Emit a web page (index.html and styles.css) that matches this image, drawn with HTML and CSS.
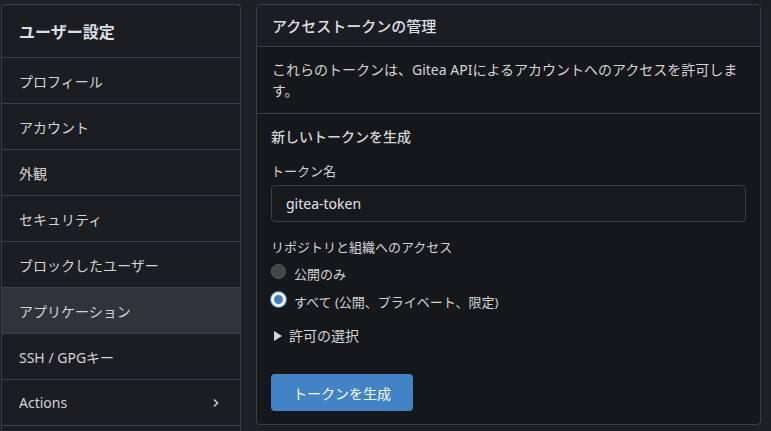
FILE: index.html
```html
<!DOCTYPE html>
<html lang="ja">
<head>
    <meta charset="UTF-8">
    <meta name="viewport" content="width=device-width, initial-scale=1.0">
    <title>アプリケーション - ユーザー設定</title>
    <link rel="stylesheet" href="styles.css">
</head>
<body>
    <div class="page">
        <div class="sidebar">
            <div class="sidebar-header">ユーザー設定</div>
            <a class="menu-item" href="#">プロフィール</a>
            <a class="menu-item" href="#">アカウント</a>
            <a class="menu-item" href="#">外観</a>
            <a class="menu-item" href="#">セキュリティ</a>
            <a class="menu-item" href="#">ブロックしたユーザー</a>
            <a class="menu-item active" href="#">アプリケーション</a>
            <a class="menu-item" href="#">SSH / GPGキー</a>
            <a class="menu-item" href="#">
                <span>Actions</span>
                <svg class="chevron" width="10" height="10" viewBox="0 0 10 10">
                    <path d="M3 1.5 L6.5 5 L3 8.5" fill="none" stroke="currentColor" stroke-width="1.6"/>
                </svg>
            </a>
            <div class="menu-rest"></div>
        </div>

        <div class="panel">
            <div class="panel-header">アクセストークンの管理</div>
            <div class="panel-section">
                これらのトークンは、Gitea APIによるアカウントへのアクセスを許可します。
            </div>
            <div class="panel-body">
                <div class="form-title">新しいトークンを生成</div>

                <div class="field">
                    <label class="field-label" for="tokenName">トークン名</label>
                    <input class="text-input" id="tokenName" type="text" value="gitea-token">
                </div>

                <div class="field field-radios">
                    <div class="field-label">リポジトリと組織へのアクセス</div>
                    <label class="radio-row">
                        <input class="radio" type="radio" name="scope">
                        <span>公開のみ</span>
                    </label>
                    <label class="radio-row">
                        <input class="radio" type="radio" name="scope" checked>
                        <span>すべて (公開、プライベート、限定)</span>
                    </label>
                </div>

                <details class="perm">
                    <summary>許可の選択</summary>
                </details>

                <button class="btn btn-primary">トークンを生成</button>
            </div>
        </div>
    </div>
</body>
</html>
```

FILE: styles.css
```css
* {
    box-sizing: border-box;
    margin: 0;
    padding: 0;
}

body {
    font-family: "Noto Sans", "Noto Sans CJK JP", sans-serif;
    font-size: 14px;
    background: #1d1f25;
    color: #d2d4d8;
    overflow: hidden;
}

.page {
    display: flex;
    align-items: flex-start;
    gap: 15px;
    padding: 4px 10px 0 1px;
}

.sidebar {
    width: 240px;
    flex-shrink: 0;
    background: #1b1d22;
    border: 1px solid #3a3e46;
    border-bottom: none;
    border-radius: 4px 4px 0 0;
    display: flex;
    flex-direction: column;
}

.sidebar-header {
    height: 53px;
    padding: 0 17px;
    display: flex;
    align-items: center;
    font-size: 16px;
    font-weight: 600;
    color: #dcdee2;
    border-bottom: 1px solid #3a3e46;
}

.menu-item {
    height: 46px;
    padding: 0 17px;
    display: flex;
    align-items: center;
    justify-content: space-between;
    color: #d2d4d8;
    text-decoration: none;
    border-bottom: 1px solid #3a3e46;
}

.menu-item.active {
    background: #30333a;
}

.menu-rest {
    height: 40px;
}

.chevron {
    color: #c8cacf;
    margin-right: 2px;
}

.panel {
    flex: 1;
    background: #15171b;
    border: 1px solid #3a3e46;
    border-radius: 4px;
}

.panel-header {
    height: 42px;
    padding: 0 15px;
    display: flex;
    align-items: center;
    background: #1b1d22;
    font-size: 15px;
    font-weight: 500;
    color: #dcdee2;
    border-bottom: 1px solid #3a3e46;
    border-radius: 4px 4px 0 0;
}

.panel-section {
    padding: 12px 15px 12px;
    line-height: 21px;
    border-bottom: 1px solid #3a3e46;
}

.panel-body {
    padding: 12px 14px 13px;
}

.form-title {
    font-weight: 500;
    line-height: 22px;
    margin-bottom: 12px;
}

.field {
    margin-bottom: 14px;
}

.field-label {
    display: block;
    font-size: 13px;
    line-height: 22px;
    margin-bottom: 3px;
}

.field-radios .field-label {
    margin-bottom: 1px;
}

.text-input {
    width: 100%;
    height: 37px;
    padding: 0 14px;
    background: #17191d;
    border: 1px solid #3a3e46;
    border-radius: 4px;
    color: #e2e4e8;
    font-family: inherit;
    font-size: 14px;
    outline: none;
}

.radio-row {
    display: flex;
    align-items: center;
    gap: 8px;
    height: 28px;
    font-size: 13px;
}

.radio {
    appearance: none;
    width: 15px;
    height: 15px;
    border-radius: 50%;
    background: #454545;
    border: 1px solid #5a5a5a;
    margin-top: -3px;
}

.radio:checked {
    background: #3d7fc4;
    border: 3px solid #f2f4f6;
    box-shadow: 0 0 0 1px #3d7fc4;
}

.perm {
    margin: -4px 0 27px;
}

.perm summary {
    font-size: 14px;
    line-height: 22px;
    cursor: pointer;
    list-style: none;
    display: flex;
    align-items: center;
    gap: 7px;
    padding-left: 3px;
}

.perm summary::before {
    content: "";
    border-left: 8px solid #d2d4d8;
    border-top: 5px solid transparent;
    border-bottom: 5px solid transparent;
}

.btn {
    height: 37px;
    padding: 0 22px;
    border-radius: 4px;
    border: none;
    cursor: pointer;
    font-family: inherit;
    font-size: 14px;
}

.btn-primary {
    background: #4183c4;
    color: #ffffff;
}
```
